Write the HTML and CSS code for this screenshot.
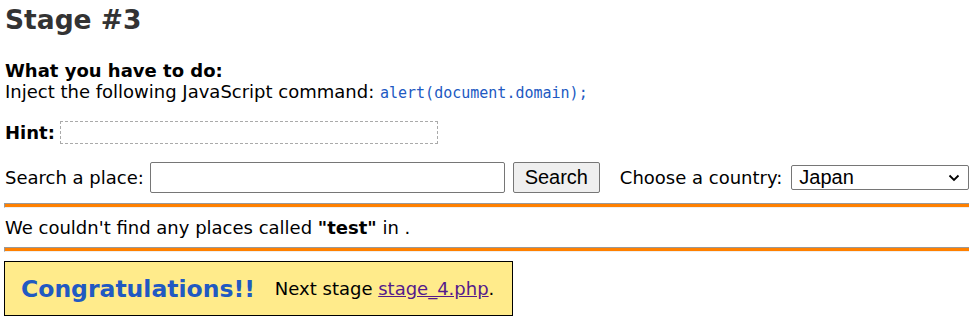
FILE: index.html
```html
<!DOCTYPE html>
<html>
<head>
<meta charset="utf-8">
<title>Stage #3</title>
<link rel="stylesheet" href="styles.css">
</head>
<body>
<h1 class="title">Stage #3</h1>
<div class="task">
  <div class="task-label">What you have to do:</div>
  <div>Inject the following JavaScript command: <code class="cmd">alert(document.domain);</code></div>
</div>
<div class="hint">
  <span class="hint-label">Hint:</span>
  <span class="hint-box"></span>
</div>
<form class="search">
  <label class="search-label">Search a place:</label>
  <input class="search-input" type="text">
  <button class="search-btn" type="button">Search</button>
  <label class="country-label">Choose a country:</label>
  <div class="select">
    <span>Japan</span>
    <svg class="chev" width="12" height="8" viewBox="0 0 12 8"><path d="M1.5 1.5 L6 6 L10.5 1.5" fill="none" stroke="#000" stroke-width="1.8"/></svg>
  </div>
</form>
<hr class="rule rule-top">
<p class="result">We couldn't find any places called <b>"test"</b> in .</p>
<hr class="rule">
<div class="congrats">
  <span class="congrats-title">Congratulations!!</span>
  <span class="next">Next stage <a class="next-link" href="#">stage_4.php</a>.</span>
</div>
</body>
</html>
```

FILE: styles.css
```css
html, body {
  margin: 0;
  padding: 0;
  background: #fff;
}
body {
  padding: 0 4px;
  font-family: "DejaVu Sans", Verdana, sans-serif;
  font-size: 18px;
  color: #000;
}
.title {
  margin: 4px 0 0 1px;
  font-size: 26.5px;
  line-height: 32px;
  color: #333;
  font-weight: bold;
}
.task {
  margin: 24px 0 0 1px;
  line-height: 21px;
}
.task-label {
  font-weight: bold;
}
.cmd {
  font-family: "DejaVu Sans Mono", monospace;
  font-size: 15px;
  color: #2159c2;
}
.hint {
  display: flex;
  align-items: center;
  gap: 5px;
  margin: 17px 0 0 1px;
  height: 23px;
}
.hint-label {
  font-weight: bold;
}
.hint-box {
  width: 376px;
  height: 21px;
  border: 1px dashed #aaa;
}
.search {
  display: flex;
  align-items: center;
  margin: 18px 0 0 1px;
  height: 31px;
  white-space: nowrap;
}
.search > * {
  flex-shrink: 0;
}
.search-input {
  margin: 0 0 0 6px;
  width: 355px;
  height: 31px;
  box-sizing: border-box;
  border: 1px solid #767676;
  border-radius: 2px;
  padding: 0 4px;
}
.search-btn {
  margin-left: 8px;
  width: 87px;
  height: 31px;
  box-sizing: border-box;
  border: 1px solid #767676;
  border-radius: 2px;
  background: #efefef;
  font-family: "Liberation Sans", Arial, sans-serif;
  font-size: 20px;
  color: #000;
  padding: 0;
}
.country-label {
  margin-left: 20px;
}
.select {
  margin-left: 9px;
  width: 178px;
  height: 25px;
  box-sizing: border-box;
  border: 1px solid #767676;
  border-radius: 2px;
  display: flex;
  align-items: center;
  justify-content: space-between;
  padding: 0 8px 0 7px;
  font-family: "Liberation Sans", Arial, sans-serif;
  font-size: 20px;
}
.rule {
  margin: 8px 0 0;
  height: 3px;
  border: 0;
  border-top: 1px solid #999;
  border-left: 1px solid #999;
  border-bottom: 1px solid #eee;
  background: #ff8000;
}
.rule-top {
  margin-top: 10px;
}
.result {
  margin: 9px 0 0 1px;
  line-height: 22px;
}
.congrats {
  margin-top: 9px;
  width: 507px;
  height: 53px;
  border: 1px solid #000;
  background: #ffeb8b;
  display: flex;
  align-items: center;
}
.congrats-title {
  margin-left: 16px;
  font-size: 23.5px;
  font-weight: bold;
  color: #2159c2;
}
.next {
  margin-left: 20px;
}
.next-link {
  color: #551a8b;
}
```
